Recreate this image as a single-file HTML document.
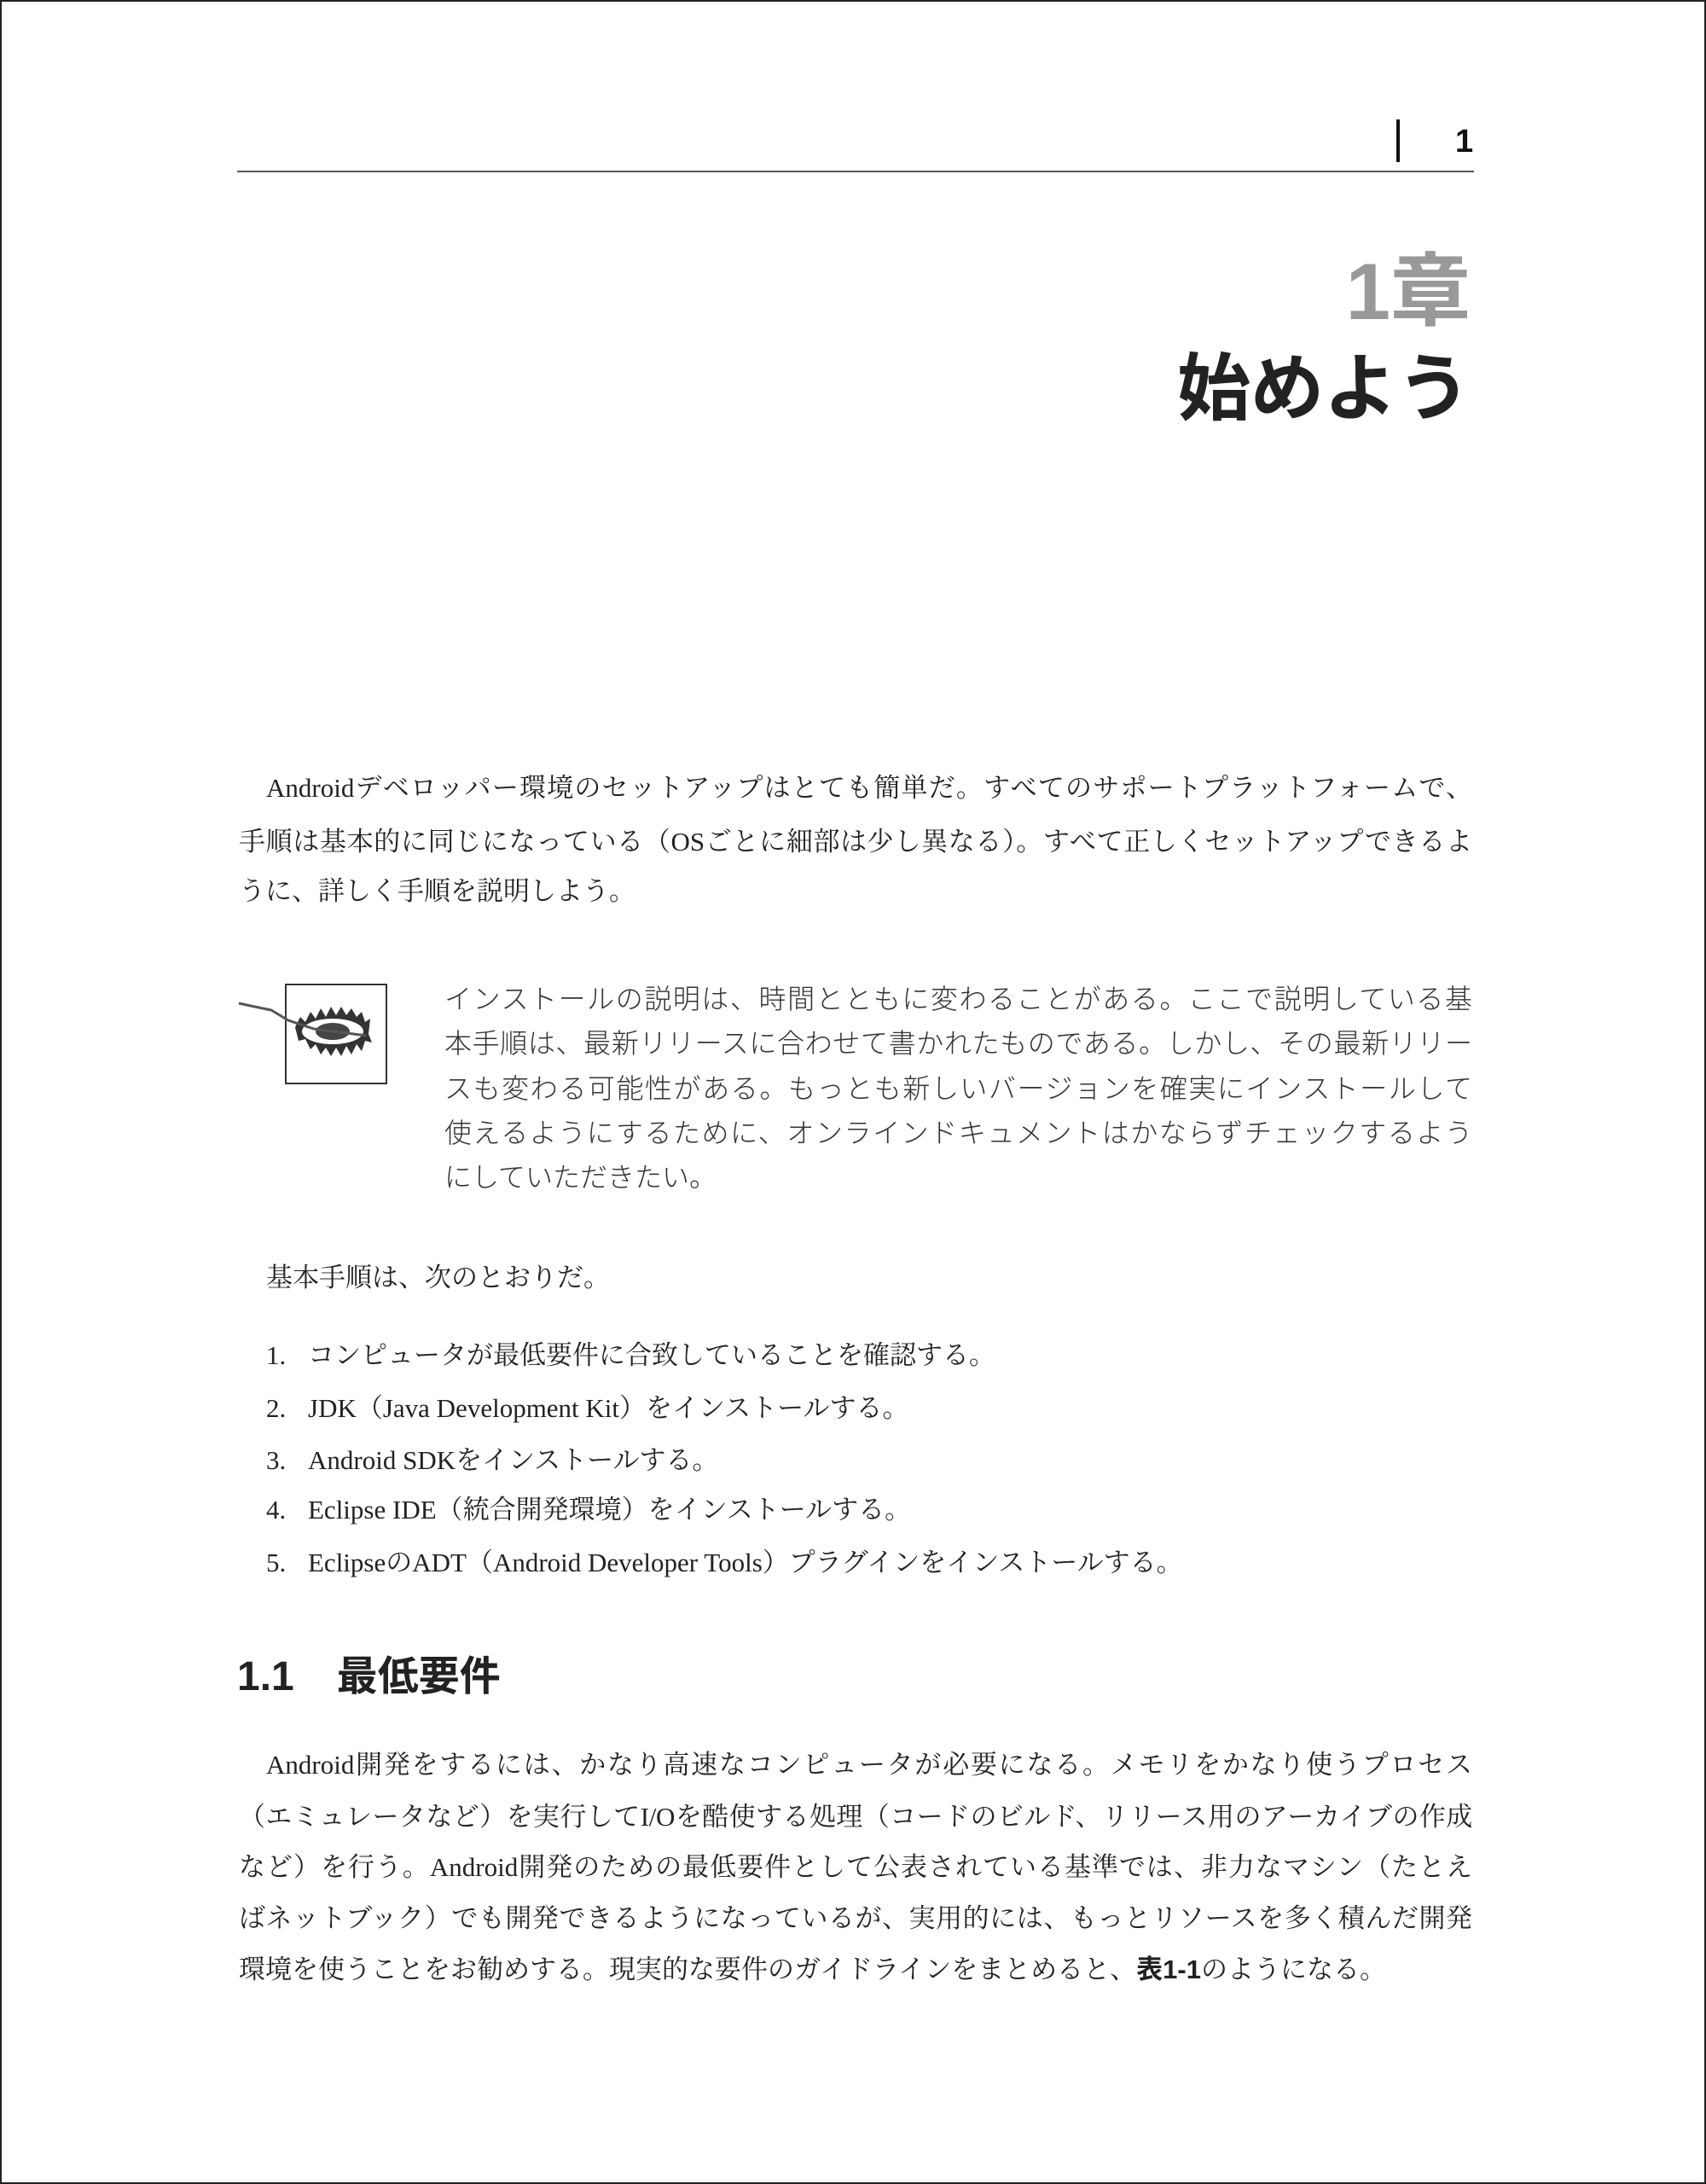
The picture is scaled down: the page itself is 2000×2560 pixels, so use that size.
<!DOCTYPE html>
<html><head><meta charset="utf-8"><style>
html,body{margin:0;padding:0;background:#fff}
body{width:2000px;height:2560px;position:relative;overflow:hidden;box-sizing:border-box;border:2px solid #222}
.l{position:absolute;height:40px;line-height:40px;font-size:32px;white-space:nowrap;text-align:justify;text-align-last:justify;color:#222}
.m{font-family:"Liberation Serif","Noto Serif CJK JP",serif;font-size:31px}
.g{font-family:"Liberation Sans","Noto Sans CJK JP",sans-serif;color:#333;font-weight:300}
.b{font-family:"Liberation Sans","Noto Sans CJK JP",sans-serif;font-weight:bold}
.na{text-align-last:auto}
</style></head><body>
<div style="position:absolute;left:276px;top:198px;width:1450px;height:2px;background:#555"></div>
<div style="position:absolute;left:1635px;top:138px;width:4px;height:50px;background:#111"></div>
<div class="b" style="position:absolute;left:1704px;top:142px;font-size:38px;line-height:44px;color:#111">1</div>
<div class="b" style="position:absolute;right:274px;top:290px;font-size:94px;line-height:100px;color:#999">1章</div>
<div class="b" style="position:absolute;right:274px;top:404px;font-size:86px;line-height:100px;color:#222">始めよう</div>

<div class="l m" style="left:310px;top:902px;width:1414px">Androidデベロッパー環境のセットアップはとても簡単だ。すべてのサポートプラットフォームで、</div>
<div class="l m" style="left:278px;top:965px;width:1446px">手順は基本的に同じになっている（OSごとに細部は少し異なる）。すべて正しくセットアップできるよ</div>
<div class="l m na" style="left:278px;top:1023px">うに、詳しく手順を説明しよう。</div>

<svg style="position:absolute;left:276px;top:1150px" width="180" height="120" viewBox="0 0 180 120">
<rect x="57" y="2" width="118" height="116" fill="none" stroke="#333" stroke-width="2"/>
<path d="M68 52 L74 40 L80 46 L86 34 L92 42 L98 30 L104 40 L110 28 L116 38 L122 28 L128 38 L134 30 L140 40 L146 34 L150 46 L156 42 L154 60 L158 70 L150 68 L146 80 L140 72 L134 84 L128 74 L122 86 L116 76 L110 86 L104 76 L98 84 L92 72 L86 78 L80 66 L72 68 Z" fill="#333"/>
<ellipse cx="112" cy="57" rx="36" ry="15" fill="#fff"/>
<ellipse cx="112" cy="57" rx="20" ry="10" fill="#444"/>
<path d="M2 24 Q20 28 40 32 L60 44 L90 54 L152 62" stroke="#555" stroke-width="3" fill="none"/>
</svg>

<div class="l g" style="left:519px;top:1149px;width:1205px">インストールの説明は、時間とともに変わることがある。ここで説明している基</div>
<div class="l g" style="left:519px;top:1201px;width:1205px">本手順は、最新リリースに合わせて書かれたものである。しかし、その最新リリー</div>
<div class="l g" style="left:519px;top:1254px;width:1205px">スも変わる可能性がある。もっとも新しいバージョンを確実にインストールして</div>
<div class="l g" style="left:519px;top:1306px;width:1205px">使えるようにするために、オンラインドキュメントはかならずチェックするよう</div>
<div class="l g na" style="left:519px;top:1358px">にしていただきたい。</div>

<div class="l m na" style="left:310px;top:1476px">基本手順は、次のとおりだ。</div>
<div class="l m na" style="left:310px;top:1567px">1.</div><div class="l m na" style="left:359px;top:1567px">コンピュータが最低要件に合致していることを確認する。</div>
<div class="l m na" style="left:310px;top:1629px">2.</div><div class="l m na" style="left:359px;top:1629px">JDK（Java Development Kit）をインストールする。</div>
<div class="l m na" style="left:310px;top:1690px">3.</div><div class="l m na" style="left:359px;top:1690px">Android SDKをインストールする。</div>
<div class="l m na" style="left:310px;top:1748px">4.</div><div class="l m na" style="left:359px;top:1748px">Eclipse IDE（統合開発環境）をインストールする。</div>
<div class="l m na" style="left:310px;top:1810px">5.</div><div class="l m na" style="left:359px;top:1810px">EclipseのADT（Android Developer Tools）プラグインをインストールする。</div>

<div class="b" style="position:absolute;left:276px;top:1932px;font-size:48px;line-height:64px;color:#222">1.1<span style="display:inline-block;width:50px"></span>最低要件</div>

<div class="l m" style="left:310px;top:2047px;width:1414px">Android開発をするには、かなり高速なコンピュータが必要になる。メモリをかなり使うプロセス</div>
<div class="l m" style="left:278px;top:2108px;width:1446px;letter-spacing:-0.3px">（エミュレータなど）を実行してI/Oを酷使する処理（コードのビルド、リリース用のアーカイブの作成</div>
<div class="l m" style="left:278px;top:2167px;width:1446px">など）を行う。Android開発のための最低要件として公表されている基準では、非力なマシン（たとえ</div>
<div class="l m" style="left:278px;top:2227px;width:1446px">ばネットブック）でも開発できるようになっているが、実用的には、もっとリソースを多く積んだ開発</div>
<div class="l m na" style="left:278px;top:2287px">環境を使うことをお勧めする。現実的な要件のガイドラインをまとめると、<span class="b" style="font-weight:bold">表1-1</span>のようになる。</div>
</body></html>
